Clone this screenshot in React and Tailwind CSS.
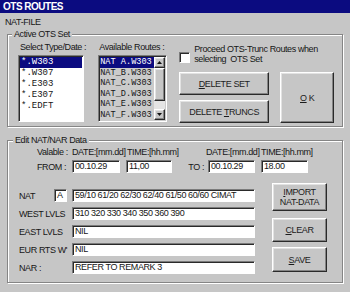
import React from 'react';

const sunken = 'border border-t-[#7b7b7b] border-l-[#7b7b7b] border-b-white border-r-white shadow-[inset_1px_1px_0_#2a2a2a]';
const raised = 'border border-t-white border-l-white border-b-[#2a2a2a] border-r-[#2a2a2a] shadow-[inset_-1px_-1px_0_#848484,inset_1px_1px_0_#e2e2e2]';

const Field = ({ value, className = '' }) => (
  <div className={`h-[13px] bg-white ${sunken} pl-[2px] leading-[11px] whitespace-nowrap overflow-hidden ${className}`}>
    {value}
  </div>
);

const Btn = ({ className = '', children }) => (
  <button
    type="button"
    className={`${raised} bg-[#c6c6c6] flex flex-col items-center justify-center leading-[10px] text-[#1c1c1c] ${className}`}
  >
    {children}
  </button>
);

const Arrow = ({ down }) => (
  <svg width="5" height="3" viewBox="0 0 5 3">
    <polygon points={down ? '0,0 5,0 2.5,3' : '0,3 5,3 2.5,0'} fill="#111" />
  </svg>
);

const types = ['*.W303', '*.W307', '*.E303', '*.E307', '*.EDFT'];
const routes = ['NAT A.W303', 'NAT_B.W303', 'NAT_C.W303', 'NAT_D.W303', 'NAT_E.W303', 'NAT_F.W303'];

const App = () => {
  return (
    <div className="w-[350px] h-[292px] overflow-hidden bg-[#c6c6c6] text-[9px] leading-[10px] tracking-[-0.4px] text-[#161616] font-['Liberation_Sans',Arial,sans-serif]">
      {/* Title bar */}
      <div className="h-[13px] bg-[#0b0b80] text-white font-bold text-[10px] leading-[13px] pl-[3px] tracking-[-0.5px]">
        OTS ROUTES
      </div>

      <div className="pl-[5px] mt-[4px] h-[10px]">NAT-FILE</div>

      {/* Active OTS Set */}
      <fieldset className="mx-[7px] mt-[2px] border border-[#858585] shadow-[inset_1px_1px_0_#fff,1px_1px_0_#fff] pb-[3px]">
        <legend className="ml-[4px] px-[2px] bg-[#c6c6c6] leading-[10px]">Active OTS Set</legend>
        <div className="flex">
          <div className="ml-[10px] pt-[3px] flex flex-col">
            <div className="pl-[2px] h-[10px] whitespace-nowrap">Select Type/Date :</div>
            <div className={`mt-[3px] w-[66px] h-[67px] bg-white ${sunken} p-[1px] overflow-hidden font-['Liberation_Mono',monospace] tracking-normal`}>
              {types.map((t, i) => (
                <div key={t} className={`h-[11px] leading-[11px] pl-[1px] ${i === 0 ? 'bg-[#0b0b80] text-white' : ''}`}>
                  {t}
                </div>
              ))}
            </div>
          </div>

          <div className="ml-[12px] pt-[3px] flex flex-col">
            <div className="pl-[1px] h-[10px] whitespace-nowrap">Available Routes :</div>
            <div className={`mt-[3px] w-[69px] h-[67px] bg-[#cbcbcb] ${sunken} p-[1px] flex overflow-hidden`}>
              <div className="flex-1 overflow-hidden font-['Liberation_Mono',monospace] text-[8.6px] tracking-normal">
                {routes.map((r, i) => (
                  <div key={r} className={`h-[10.5px] leading-[10.5px] whitespace-nowrap ${i === 0 ? 'bg-[#0b0b80] text-white' : ''}`}>
                    {r}
                  </div>
                ))}
              </div>
              <div className="w-[11px] flex flex-col">
                <div className={`h-[11px] ${raised} bg-[#c6c6c6] flex items-center justify-center`}>
                  <Arrow />
                </div>
                <div className={`h-[33px] ${raised} bg-[#c6c6c6]`} />
                <div className="flex-1 bg-[#e4e4e4]" />
                <div className={`h-[11px] ${raised} bg-[#c6c6c6] flex items-center justify-center`}>
                  <Arrow down />
                </div>
              </div>
            </div>
          </div>

          <div className="ml-[12px] pt-[5px] flex flex-col">
            <div className="flex items-start">
              <div className={`mt-[8px] w-[11px] h-[11px] bg-white ${sunken}`} />
              <div className="ml-[4px] leading-[10px]">
                <div>Proceed OTS-Trunc Routes when</div>
                <div>selecting&nbsp; OTS Set</div>
              </div>
            </div>
            <div className="mt-[8px] flex gap-[11px]">
              <div className="flex flex-col gap-[5px]">
                <Btn className="w-[90px] h-[23px]">
                  <span><span className="underline">D</span>ELETE SET</span>
                </Btn>
                <Btn className="w-[90px] h-[23px]">
                  <span>DELETE <span className="underline">T</span>RUNCS</span>
                </Btn>
              </div>
              <Btn className="w-[54px] h-[51px]">
                <span><span className="underline">O</span> K</span>
              </Btn>
            </div>
          </div>
        </div>
      </fieldset>

      {/* Edit NAT/NAR Data */}
      <fieldset className="mx-[7px] mt-[8px] border border-[#858585] shadow-[inset_1px_1px_0_#fff,1px_1px_0_#fff] pb-[8px]">
        <legend className="ml-[5px] px-[2px] bg-[#c6c6c6] leading-[10px]">Edit NAT/NAR Data</legend>

        <div className="pl-[29px] pt-[2px] grid grid-cols-[35px_48px_6px_46px_36px_47px_6px_47px] whitespace-nowrap">
          <div className="h-[10px]">Valable :</div>
          <div>DATE:[mm.dd]</div>
          <div />
          <div className="pl-[1px]">TIME:[hh.mm]</div>
          <div />
          <div className="-ml-[2px]">DATE:[mm.dd]</div>
          <div />
          <div>TIME:[hh.mm]</div>

          <div className="mt-[3px] flex items-center">FROM :</div>
          <Field className="mt-[3px]" value="00.10.29" />
          <div />
          <Field className="mt-[3px]" value="11,00" />
          <div className="mt-[3px] flex items-center justify-end pr-[4px]">TO :</div>
          <Field className="mt-[3px]" value="00.10.29" />
          <div />
          <Field className="mt-[3px]" value="18.00" />
        </div>

        <div className="mt-[10px] pl-[11px] flex">
          <div className="pt-[6px] grid grid-cols-[35px_13px_5px_183px] gap-y-[5px] items-center whitespace-nowrap">
            <div>NAT</div>
            <Field value="A" />
            <div />
            <Field value="59/10 61/20 62/30 62/40 61/50 60/60 CIMAT" />

            <div className="col-span-3">WEST LVLS</div>
            <Field value="310 320 330 340 350 360 390" />

            <div className="col-span-3">EAST LVLS</div>
            <Field value="NIL" />

            <div className="col-span-3">EUR RTS W'</div>
            <Field value="NIL" />

            <div className="col-span-3">NAR :</div>
            <Field value="REFER TO REMARK 3" />
          </div>

          <div className="ml-[17px] flex flex-col">
            <Btn className="w-[55px] h-[28px]">
              <span><span className="underline">I</span>MPORT</span>
              <span>NAT-DATA</span>
            </Btn>
            <Btn className="mt-[7px] w-[55px] h-[24px]">
              <span><span className="underline">C</span>LEAR</span>
            </Btn>
            <Btn className="mt-[5px] w-[55px] h-[25px]">
              <span><span className="underline">S</span>AVE</span>
            </Btn>
          </div>
        </div>
      </fieldset>
    </div>
  );
};

export default App;
